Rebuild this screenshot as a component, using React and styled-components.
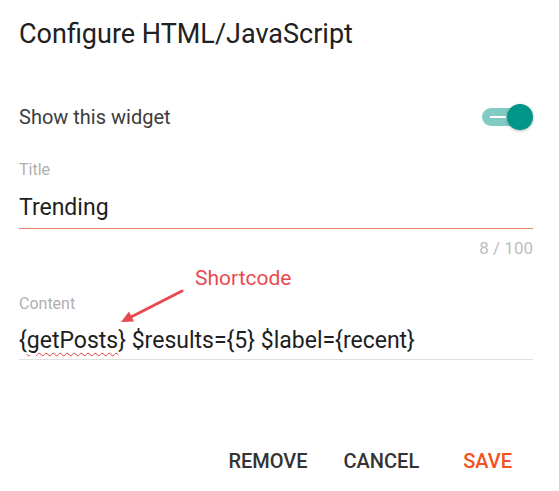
import React from "react";
import styled, { createGlobalStyle } from "styled-components";

const Global = createGlobalStyle`
  html, body { margin: 0; padding: 0; background: #fff; }
  body { font-family: Roboto, "Noto Sans", sans-serif; }
`;

const Dialog = styled.div`
  width: 559px;
  height: 491px;
  box-sizing: border-box;
  padding: 17px 26px 0 19px;
  display: flex;
  flex-direction: column;
`;

const Heading = styled.h1`
  margin: 0;
  font-size: 27px;
  font-weight: 400;
  color: #212121;
  line-height: 34px;
`;

const SwitchRow = styled.div`
  margin-top: 49px;
  display: flex;
  align-items: center;
  justify-content: space-between;
  height: 34px;
`;

const SwitchLabel = styled.span`
  font-size: 20px;
  color: #3c3c3c;
`;

const Track = styled.div`
  position: relative;
  width: 43px;
  height: 18px;
  border-radius: 9px;
  background: #80cbc4;
  margin-right: 8px;
`;

const TrackLine = styled.div`
  position: absolute;
  left: 8px;
  top: 8px;
  width: 16px;
  height: 2px;
  background: #fff;
`;

const Thumb = styled.div`
  position: absolute;
  right: -8px;
  top: -4px;
  width: 26px;
  height: 26px;
  border-radius: 50%;
  background: #009688;
  box-shadow: 0 1px 3px rgba(0, 0, 0, 0.3);
`;

const Field = styled.div`
  display: flex;
  flex-direction: column;
  margin-top: ${(p) => p.$top}px;
`;

const FieldLabel = styled.label`
  font-size: 16px;
  color: #b0b0b0;
  line-height: 20px;
`;

const Value = styled.div`
  font-size: ${(p) => p.$size}px;
  color: #1e1e1e;
  line-height: 30px;
  padding-top: ${(p) => p.$pt}px;
  padding-bottom: ${(p) => p.$pb}px;
  border-bottom: 1px solid ${(p) => p.$line};
  white-space: nowrap;
`;

const Counter = styled.div`
  align-self: flex-end;
  font-size: 17px;
  line-height: 20px;
  color: #bdbdbd;
  margin-top: 9px;
`;

const Squiggle = styled.span`
  text-decoration: underline wavy #e53935;
  text-decoration-thickness: 1px;
  text-underline-offset: 4px;
`;

const AnnotationWrap = styled.div`
  position: relative;
  height: 0;
`;

const Annotation = styled.div`
  position: absolute;
  left: 176px;
  top: -28px;
  font-size: 21px;
  line-height: 24px;
  color: #e84a4f;
`;

const Arrow = styled.svg`
  position: absolute;
  left: 95px;
  top: -10px;
`;

const Actions = styled.div`
  margin-top: auto;
  margin-bottom: 18px;
  display: flex;
  justify-content: flex-end;
  padding-right: 21px;
`;

const ActionButton = styled.button`
  border: none;
  background: none;
  font-family: Roboto, sans-serif;
  font-size: 20px;
  font-weight: 500;
  text-transform: uppercase;
  color: ${(p) => (p.$primary ? "#f4511e" : "#333")};
  padding: 0;
  margin-left: ${(p) => p.$gap || 0}px;
  line-height: 24px;
`;

export default function App() {
  return (
    <>
      <Global />
      <Dialog>
        <Heading>Configure HTML/JavaScript</Heading>
        <SwitchRow>
          <SwitchLabel>Show this widget</SwitchLabel>
          <Track>
            <TrackLine />
            <Thumb />
          </Track>
        </SwitchRow>
        <Field $top={26}>
          <FieldLabel>Title</FieldLabel>
          <Value $size={23} $pt={13} $pb={5} $line="#e8846a">Trending</Value>
          <Counter>8 / 100</Counter>
        </Field>
        <Field $top={36}>
          <AnnotationWrap>
            <Annotation>Shortcode</Annotation>
            <Arrow width="80" height="45" viewBox="0 0 80 45">
              <line x1="68" y1="7" x2="17" y2="33" stroke="#e84a4f" strokeWidth="3" strokeLinecap="round" />
              <polygon points="7,38 20,37.5 15,27.5" fill="#e84a4f" />
            </Arrow>
          </AnnotationWrap>
          <FieldLabel>Content</FieldLabel>
          <Value $size={23} $pt={12} $pb={3} $line="#e0e0e0">
            {"{"}<Squiggle>getPosts</Squiggle>{"} $results={5} $label={recent}"}
          </Value>
        </Field>
        <Actions>
          <ActionButton>Remove</ActionButton>
          <ActionButton $gap={36}>Cancel</ActionButton>
          <ActionButton $gap={44} $primary>Save</ActionButton>
        </Actions>
      </Dialog>
    </>
  );
}
